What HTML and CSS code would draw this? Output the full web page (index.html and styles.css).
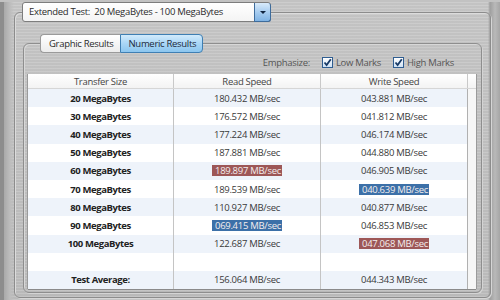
FILE: index.html
```html
<!DOCTYPE html>
<html lang="en">
<head>
  <meta charset="UTF-8" />
  <title>Extended Test</title>
  <link rel="stylesheet" href="styles.css">
</head>
<body>
  <div class="window">
    <fieldset class="test-box">
      <legend class="test-select">
        <span class="select-text">Extended Test:&nbsp; 20 MegaBytes - 100 MegaBytes</span>
        <span class="select-btn"><span class="arrow"></span></span>
      </legend>

      <fieldset class="results-box">
        <legend class="tabs">
          <span class="tab">Graphic Results</span>
          <span class="tab active">Numeric Results</span>
        </legend>

        <div class="emphasize">
          <span class="emph-label">Emphasize:</span>
          <label class="check"><span class="box"><svg viewBox="0 0 11 11" width="11" height="11"><path d="M2.5 5.5 L4.6 8 L8.8 2.2" fill="none" stroke="#183a66" stroke-width="1.8"/></svg></span>Low Marks</label>
          <label class="check"><span class="box"><svg viewBox="0 0 11 11" width="11" height="11"><path d="M2.5 5.5 L4.6 8 L8.8 2.2" fill="none" stroke="#183a66" stroke-width="1.8"/></svg></span>High Marks</label>
        </div>

        <table class="results">
          <thead>
            <tr>
              <th class="c-size">Transfer Size</th>
              <th class="c-read">Read Speed</th>
              <th class="c-write">Write Speed</th>
              <th class="c-pad"></th>
            </tr>
          </thead>
          <tbody>
            <tr><td class="size">20 MegaBytes</td><td>180.432 MB/sec</td><td>043.881 MB/sec</td><td class="pad"></td></tr>
            <tr><td class="size">30 MegaBytes</td><td>176.572 MB/sec</td><td>041.812 MB/sec</td><td class="pad"></td></tr>
            <tr><td class="size">40 MegaBytes</td><td>177.224 MB/sec</td><td>046.174 MB/sec</td><td class="pad"></td></tr>
            <tr><td class="size">50 MegaBytes</td><td>187.881 MB/sec</td><td>044.880 MB/sec</td><td class="pad"></td></tr>
            <tr><td class="size">60 MegaBytes</td><td><span class="mark high">189.897 MB/sec</span></td><td>046.905 MB/sec</td><td class="pad"></td></tr>
            <tr><td class="size">70 MegaBytes</td><td>189.539 MB/sec</td><td><span class="mark low">040.639 MB/sec</span></td><td class="pad"></td></tr>
            <tr><td class="size">80 MegaBytes</td><td>110.927 MB/sec</td><td>040.877 MB/sec</td><td class="pad"></td></tr>
            <tr><td class="size">90 MegaBytes</td><td><span class="mark low">069.415 MB/sec</span></td><td>046.853 MB/sec</td><td class="pad"></td></tr>
            <tr><td class="size">100 MegaBytes</td><td>122.687 MB/sec</td><td><span class="mark high">047.068 MB/sec</span></td><td class="pad"></td></tr>
            <tr><td class="size"></td><td></td><td></td><td class="pad"></td></tr>
            <tr><td class="size">Test Average:</td><td>156.064 MB/sec</td><td>044.343 MB/sec</td><td class="pad"></td></tr>
          </tbody>
        </table>
      </fieldset>
    </fieldset>
  </div>
</body>
</html>
```

FILE: styles.css
```css
html, body {
  margin: 0;
  padding: 0;
}

body {
  width: 500px;
  height: 300px;
  overflow: hidden;
  font-family: "Open Sans", "Noto Sans", sans-serif;
  font-size: 9.5px;
  letter-spacing: -0.3px;
  color: #333;
  background-color: #c2c2c2;
}

.window {
  height: 300px;
  box-sizing: border-box;
  padding: 0 12px 0 10px;
  border-left: 4px solid #8d8d8d;
  background:
    linear-gradient(to right, #a9a9a9 0, #bdbdbd 6px, transparent 10px),
    linear-gradient(to left, #a6a6a6 0, #b9b9b9 5px, #9f9f9f 10px, transparent 12px),
    repeating-linear-gradient(to bottom, rgba(255,255,255,0.08) 0, rgba(255,255,255,0.08) 1px, rgba(0,0,0,0.03) 1px, rgba(0,0,0,0.03) 3px),
    linear-gradient(to bottom, #c9c9c9, #bfbfbf);
}

/* outer group box */
.test-box {
  margin: 2px 0 0 0;
  padding: 12px 8px 0 8px;
  height: 296px;
  box-sizing: border-box;
  border: 1px solid #8c8c8c;
  border-radius: 6px;
  box-shadow: inset 1px 1px 0 #dcdcdc, 1px 1px 0 #d6d6d6;
}

.test-select {
  display: flex;
  align-items: stretch;
  width: 249px;
  height: 20px;
  box-sizing: border-box;
  padding: 0;
  margin-left: -1px;
  background: linear-gradient(to bottom, #ffffff, #f4f4f4);
  border: 1px solid #7d7d7d;
  border-radius: 3px;
}

.select-text {
  flex: 1;
  padding-left: 6px;
  line-height: 18px;
  color: #2b2b2b;
}

.select-btn {
  width: 15px;
  margin: 0 -1px -1px 0;
  border: 1px solid #3e6c9c;
  border-top: none;
  border-radius: 0 3px 3px 0;
  background: linear-gradient(to bottom, #d9ebfb, #a8cdf0 50%, #7fb3e4);
  display: flex;
  align-items: center;
  justify-content: center;
}

.arrow {
  width: 0;
  height: 0;
  border-left: 3px solid transparent;
  border-right: 3px solid transparent;
  border-top: 3px solid #10243f;
}

/* inner group box */
.results-box {
  margin: 0;
  padding: 1px 5px 0 4px;
  height: 259px;
  box-sizing: border-box;
  border: 1px solid #8e8e8e;
  border-radius: 6px;
  box-shadow: inset 1px 1px 0 #d8d8d8, 1px 1px 0 #d4d4d4;
}

.tabs {
  display: flex;
  padding: 0;
  margin-left: 12px;
  height: 19px;
}

.tab {
  padding: 0 6px 0 8px;
  line-height: 17px;
  color: #2a2a2a;
  border: 1px solid #9a9a9a;
  background: linear-gradient(to bottom, #ffffff, #ececec);
}

.tab:first-child {
  border-radius: 4px 0 0 4px;
  border-right: none;
}

.tab.active {
  padding: 0 6px 0 8px;
  border-color: #3f7fb3;
  border-radius: 0 4px 4px 0;
  background: linear-gradient(to bottom, #d2ebfc, #a9d6f6 50%, #8cc6ef);
  color: #1d2a3a;
}

.emphasize {
  display: flex;
  justify-content: flex-end;
  align-items: center;
  gap: 12px;
  height: 16px;
  margin: 0 22px 4px 0;
  color: #555;
}

.check {
  display: flex;
  align-items: center;
  gap: 3px;
}

.box {
  width: 11px;
  height: 11px;
  box-sizing: border-box;
  border: 1px solid #2f5d90;
  background: linear-gradient(to bottom, #ffffff, #cfe2f5);
  display: flex;
}

.box svg {
  margin: -1px;
}

/* table */
.results {
  width: 445px;
  border-collapse: collapse;
  table-layout: fixed;
  background: #fff;
  box-shadow: 0 1px 0 #8a8a8a, 1px 0 0 #9a9a9a, -1px 0 0 #9a9a9a;
}

.results th {
  height: 14px;
  padding: 0;
  font-weight: normal;
  color: #444;
  background: linear-gradient(to bottom, #ffffff, #f3f3f3);
  border-left: 1px solid #c9c9c9;
  border-bottom: 1px solid #d6d6d6;
  line-height: 13px;
}

.results th:first-child {
  border-left: none;
}

.c-size { width: 145px; }
.c-read { width: 146px; }
.c-write { width: 146px; }
.c-pad { width: 8px; }

.results td {
  height: 18.2px;
  padding: 0;
  text-align: center;
  color: #3a3a3a;
  border-left: 1px solid #c4c4c4;
}

.results td:first-child {
  border-left: none;
}

.results td.size {
  font-weight: bold;
  letter-spacing: -0.4px;
  color: #222;
}

.results td.pad {
  background: #f6f6f6;
  border-left: 1px solid #b0b0b0;
}

.results tbody tr:nth-child(odd) {
  background: #eef3fa;
}

.mark {
  display: inline-block;
  line-height: 11px;
  padding: 0 1px 0 3px;
  color: #f4eeee;
}

.mark.high {
  background: #9d5757;
}

.mark.low {
  background: #3c70a8;
}
```
